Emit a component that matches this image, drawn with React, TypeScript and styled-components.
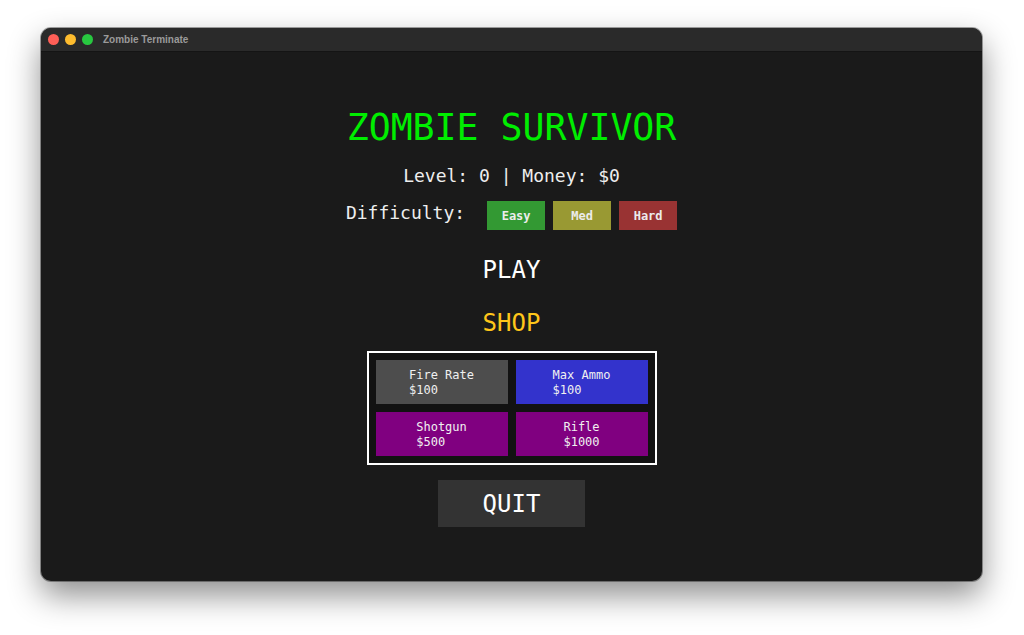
import styled, { createGlobalStyle } from "styled-components";

const GlobalStyle = createGlobalStyle`
    html, body {
        margin: 0;
        padding: 0;
        background: #ffffff;
    }
`;

const Desktop = styled.div`
    width: 1024px;
    height: 635px;
    box-sizing: border-box;
    padding: 28px 42px 54px 41px;
    display: flex;
`;

const Window = styled.div`
    flex: 1;
    display: flex;
    flex-direction: column;
    border-radius: 10px;
    overflow: hidden;
    background: #1a1a1a;
    box-shadow: 0 14px 32px rgba(0, 0, 0, 0.45), 0 0 0 1px rgba(0, 0, 0, 0.35);
`;

const TitleBar = styled.div`
    height: 23px;
    display: flex;
    align-items: center;
    gap: 6px;
    padding-left: 7px;
    background: #2a2a2a;
    border-bottom: 1px solid #141414;
`;

const Light = styled.span<{ $color: string }>`
    width: 11px;
    height: 11px;
    border-radius: 50%;
    background: ${(p) => p.$color};
`;

const WindowTitle = styled.span`
    margin-left: 4px;
    font-family: "Liberation Sans", Arial, sans-serif;
    font-weight: bold;
    font-size: 10px;
    color: #9a9a9a;
`;

const Screen = styled.main`
    flex: 1;
    display: flex;
    flex-direction: column;
    align-items: center;
    padding-top: 54px;
    font-family: "DejaVu Sans Mono", "Liberation Mono", monospace;
    color: #eeeeee;
`;

const Title = styled.h1`
    margin: 0;
    font-size: 36.5px;
    line-height: 44px;
    font-weight: normal;
    color: #00ee00;
`;

const Stats = styled.div`
    margin-top: 14px;
    font-size: 18px;
    line-height: 24px;
`;

const DifficultyRow = styled.div`
    margin-top: 13px;
    display: flex;
    align-items: flex-start;
    gap: 8px;
`;

const DifficultyLabel = styled.span`
    font-size: 18px;
    line-height: 24px;
    margin-right: 14px;
`;

const DifficultyButton = styled.button<{ $bg: string }>`
    width: 58px;
    height: 29px;
    border: 0;
    padding: 0;
    font-family: inherit;
    font-size: 12px;
    font-weight: bold;
    color: #ececec;
    background: ${(p) => p.$bg};
`;

const MenuItem = styled.div<{ $color: string }>`
    font-size: 24px;
    line-height: 30px;
    color: ${(p) => p.$color};
    margin-top: ${(p) => (p.$color === "#ffffff" ? 25 : 23)}px;
`;

const ShopPanel = styled.div`
    margin-top: 13px;
    width: 290px;
    box-sizing: border-box;
    padding: 7px;
    border: 2px solid #ffffff;
    background: #121212;
    display: grid;
    grid-template-columns: 1fr 1fr;
    gap: 8px;
`;

const ShopItem = styled.button<{ $bg: string }>`
    height: 44px;
    border: 0;
    padding: 0;
    display: flex;
    align-items: center;
    justify-content: center;
    background: ${(p) => p.$bg};
    font-family: inherit;
    color: #f0f0f0;
`;

const ItemText = styled.span`
    text-align: left;
    font-size: 12px;
    line-height: 15px;
    white-space: pre;
    padding-top: 2px;
`;

const QuitButton = styled.button`
    margin-top: 15px;
    width: 147px;
    height: 47px;
    border: 0;
    background: #333333;
    font-family: inherit;
    font-size: 24px;
    color: #ffffff;
`;

const items = [
    { name: "Fire Rate", price: 100, bg: "#4d4d4d" },
    { name: "Max Ammo", price: 100, bg: "#3333cc" },
    { name: "Shotgun", price: 500, bg: "#800080" },
    { name: "Rifle", price: 1000, bg: "#800080" },
];

export default function App() {
    return (
        <>
            <GlobalStyle />
            <Desktop>
                <Window>
                    <TitleBar>
                        <Light $color="#ff5f57" />
                        <Light $color="#febc2e" />
                        <Light $color="#28c840" />
                        <WindowTitle>Zombie Terminate</WindowTitle>
                    </TitleBar>
                    <Screen>
                        <Title>ZOMBIE SURVIVOR</Title>
                        <Stats>Level: 0 | Money: $0</Stats>
                        <DifficultyRow>
                            <DifficultyLabel>Difficulty:</DifficultyLabel>
                            <DifficultyButton $bg="#339933">Easy</DifficultyButton>
                            <DifficultyButton $bg="#999933">Med</DifficultyButton>
                            <DifficultyButton $bg="#993333">Hard</DifficultyButton>
                        </DifficultyRow>
                        <MenuItem $color="#ffffff">PLAY</MenuItem>
                        <MenuItem $color="#ffc61a">SHOP</MenuItem>
                        <ShopPanel>
                            {items.map((item) => (
                                <ShopItem key={item.name} $bg={item.bg}>
                                    <ItemText>{`${item.name}\n$${item.price}`}</ItemText>
                                </ShopItem>
                            ))}
                        </ShopPanel>
                        <QuitButton>QUIT</QuitButton>
                    </Screen>
                </Window>
            </Desktop>
        </>
    );
}
